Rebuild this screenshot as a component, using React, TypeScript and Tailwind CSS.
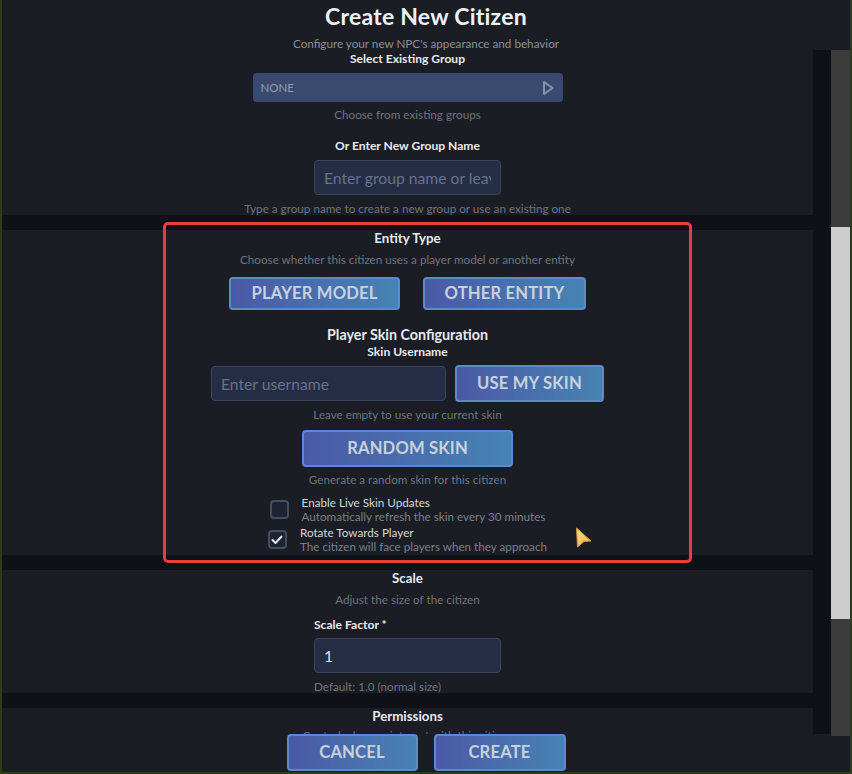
import React from "react";

const Btn = ({ label, className }: { label: string; className: string }) => (
  <button
    className={`rounded-[4px] border-2 border-[#5a8bd2] bg-linear-to-r from-[#4a59a6] to-[#4683b3] text-[#c9d1dc] font-bold text-[16.6px] tracking-[0.01em] flex items-center justify-center ${className}`}
  >
    {label}
  </button>
);

const Hint = ({ children, className = "" }: { children: React.ReactNode; className?: string }) => (
  <p className={`text-[11.7px] leading-[14px] text-[#6f747d] ${className}`}>{children}</p>
);

const Label = ({ children, className = "" }: { children: React.ReactNode; className?: string }) => (
  <p className={`text-[12.1px] leading-[14px] font-bold text-[#e8eaee] ${className}`}>{children}</p>
);

const Heading = ({ children, className = "" }: { children: React.ReactNode; className?: string }) => (
  <h2 className={`text-[13.3px] leading-[16px] font-bold text-[#e8eaee] ${className}`}>{children}</h2>
);

const Field = ({ placeholder, value, className }: { placeholder?: string; value?: string; className: string }) => (
  <input
    readOnly
    placeholder={placeholder}
    value={value ?? ""}
    className={`h-[35px] rounded-[4px] border border-[#3b4560] bg-[#252d45] px-[9px] text-[15.7px] text-[#dde2ea] placeholder:text-[#67728d] outline-none ${className}`}
  />
);

const Check = ({ checked, title, sub }: { checked?: boolean; title: string; sub: string }) => (
  <div className="flex items-center gap-[13px]">
    <div className="w-[19px] h-[19px] rounded-[4px] border-2 border-[#454d66] bg-[#1e2332] flex items-center justify-center">
      {checked && (
        <svg width="12" height="10" viewBox="0 0 12 10">
          <path d="M1.5 5 L4.5 8 L10.5 1.5" fill="none" stroke="#e2e6ec" strokeWidth="2" strokeLinecap="round" strokeLinejoin="round" />
        </svg>
      )}
    </div>
    <div>
      <p className="text-[11.7px] leading-[14px] text-[#d3d7dd]">{title}</p>
      <p className="text-[11.7px] leading-[15px] text-[#7b8089]">{sub}</p>
    </div>
  </div>
);

export default function App() {
  return (
    <div className="relative w-[852px] h-[774px] bg-[#2c3c18] pl-[2px] pr-[2px] pb-[2px] font-['Lato','Noto_Sans',sans-serif]">
      <div className="h-full flex flex-col bg-[#1a1d24]">
        {/* header */}
        <header className="h-[50px] shrink-0 flex flex-col items-center">
          <h1 className="mt-[3px] text-[23px] leading-[26px] font-bold tracking-[0.01em] text-[#eef0f4]">Create New Citizen</h1>
          <p className="mt-[7px] text-[11.7px] leading-[14px] text-[#8b9099]">
            Configure your new NPC's appearance and behavior
          </p>
        </header>

        {/* scroll body */}
        <div className="h-[684px] shrink-0 flex">
          <div className="flex-1 bg-[#0f1116] pr-[18px] overflow-hidden flex flex-col gap-[15px]">
            {/* group */}
            <section className="h-[165px] shrink-0 bg-[#1a1d24] flex flex-col items-center pt-[2px]">
              <Label>Select Existing Group</Label>
              <div className="mt-[7px] w-[310px] h-[29px] rounded-[4px] bg-[#3a4a6f] flex items-center justify-between pl-[8px] pr-[9px]">
                <span className="text-[11.5px] text-[#909cb8]">NONE</span>
                <svg width="12" height="16" viewBox="0 0 12 16">
                  <path d="M2 2 L10.5 8 L2 14 Z" fill="none" stroke="#8693af" strokeWidth="2" strokeLinejoin="round" />
                </svg>
              </div>
              <Hint className="mt-[5px]">Choose from existing groups</Hint>
              <Label className="mt-[18px]">Or Enter New Group Name</Label>
              <Field className="mt-[7px] w-[187px]" placeholder="Enter group name or leave empty" />
              <Hint className="mt-[6px]">Type a group name to create a new group or use an existing one</Hint>
            </section>

            {/* entity type */}
            <section className="h-[325px] shrink-0 bg-[#1a1d24] flex flex-col items-center">
              <Heading>Entity Type</Heading>
              <Hint className="mt-[6px]">Choose whether this citizen uses a player model or another entity</Hint>
              <div className="mt-[11px] flex gap-[23px]">
                <Btn label="PLAYER MODEL" className="w-[171px] h-[33px]" />
                <Btn label="OTHER ENTITY" className="w-[163px] h-[33px]" />
              </div>
              <h3 className="mt-[17px] text-[14.3px] leading-[16px] font-bold text-[#e8eaee]">Player Skin Configuration</h3>
              <Label className="mt-[2px]">Skin Username</Label>
              <div className="mt-[6px] flex items-center gap-[9px]">
                <Field className="w-[235px]" placeholder="Enter username" />
                <Btn label="USE MY SKIN" className="w-[149px] h-[37px]" />
              </div>
              <Hint className="mt-[5px]">Leave empty to use your current skin</Hint>
              <Btn label="RANDOM SKIN" className="mt-[9px] w-[211px] h-[37px]" />
              <Hint className="mt-[5px]">Generate a random skin for this citizen</Hint>
              <div className="mt-[9px] flex flex-col items-center gap-[1px]">
                <Check title="Enable Live Skin Updates" sub="Automatically refresh the skin every 30 minutes" />
                <Check checked title="Rotate Towards Player" sub="The citizen will face players when they approach" />
              </div>
            </section>

            {/* scale */}
            <section className="h-[123px] shrink-0 bg-[#1a1d24] flex flex-col items-center">
              <Heading>Scale</Heading>
              <Hint className="mt-[6px]">Adjust the size of the citizen</Hint>
              <div className="mt-[12px] w-[187px]">
                <Label>Scale Factor *</Label>
                <Field className="mt-[6px] w-[187px]" value="1" />
                <Hint className="mt-[6px]">Default: 1.0 (normal size)</Hint>
              </div>
            </section>

            {/* permissions */}
            <section className="flex-1 shrink-0 bg-[#1a1d24] flex flex-col items-center">
              <Heading>Permissions</Heading>
              <Hint className="mt-[4px]">Control who can interact with this citizen</Hint>
            </section>
          </div>

          {/* scrollbar */}
          <div className="w-[19px] bg-[#3c3c3c] pt-[177px] mb-[-2px]">
            <div className="h-[392px] bg-[#cdcdcd]" />
          </div>
        </div>

        {/* footer */}
        <footer className="flex-1 flex justify-center gap-[16px]">
          <Btn label="CANCEL" className="w-[131px] h-[37px]" />
          <Btn label="CREATE" className="w-[132px] h-[37px]" />
        </footer>
      </div>

      {/* highlight outline */}
      <div className="absolute left-[163px] top-[222px] w-[529px] h-[341px] rounded-[5px] border-[3px] border-[#ec3c3c] pointer-events-none" />

      {/* mouse cursor */}
      <svg className="absolute left-[575px] top-[527px]" width="17" height="21" viewBox="0 0 17 21">
        <defs>
          <linearGradient id="cur" x1="0" y1="0" x2="1" y2="1">
            <stop offset="0" stopColor="#fbe08a" />
            <stop offset="1" stopColor="#eea83c" />
          </linearGradient>
        </defs>
        <path d="M1.5 1 L16 14 L9 14.5 L2.5 20 Z" fill="url(#cur)" stroke="#d8962e" strokeWidth="1" strokeLinejoin="round" />
      </svg>
    </div>
  );
}
